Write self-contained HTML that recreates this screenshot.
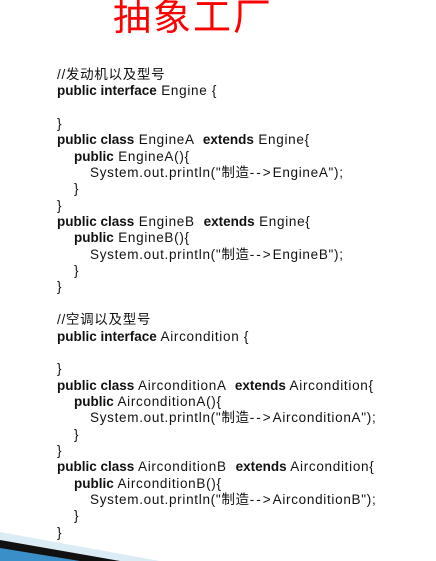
<html><head><style>
body{margin:0;width:436px;height:561px;background:#fff;position:relative;overflow:hidden;font-family:"Liberation Sans","Noto Sans CJK SC",sans-serif;}
.t{position:absolute;left:113px;top:-14px;font-size:38px;color:#f00;letter-spacing:2px;font-family:"Noto Sans CJK SC",sans-serif;}
.c{position:absolute;left:57px;top:67px;font-size:13.5px;line-height:16.35px;color:#111;white-space:pre;letter-spacing:0.7px}
.c div{height:16.35px}
.i1{padding-left:17px}.i2{padding-left:33px}
b{font-weight:bold;letter-spacing:0}
.a{letter-spacing:2px}
</style></head><body>
<div class="t">抽象工厂</div>
<div class="c"><div>//发动机以及型号</div><div><b>public interface</b> Engine {</div><div></div><div>}</div><div><b>public class</b> EngineA  <b>extends</b> Engine{</div><div class="i1"><b>public</b> EngineA(){</div><div class="i2">System.out.println("制造<span class="a">--&gt;</span>EngineA");</div><div class="i1">}</div><div>}</div><div><b>public class</b> EngineB  <b>extends</b> Engine{</div><div class="i1"><b>public</b> EngineB(){</div><div class="i2">System.out.println("制造<span class="a">--&gt;</span>EngineB");</div><div class="i1">}</div><div>}</div><div></div><div>//空调以及型号</div><div><b>public interface</b> Aircondition {</div><div></div><div>}</div><div><b>public class</b> AirconditionA  <b>extends</b> Aircondition{</div><div class="i1"><b>public</b> AirconditionA(){</div><div class="i2">System.out.println("制造<span class="a">--&gt;</span>AirconditionA");</div><div class="i1">}</div><div>}</div><div><b>public class</b> AirconditionB  <b>extends</b> Aircondition{</div><div class="i1"><b>public</b> AirconditionB(){</div><div class="i2">System.out.println("制造<span class="a">--&gt;</span>AirconditionB");</div><div class="i1">}</div><div>}</div></div>
<svg style="position:absolute;left:0;top:0" width="436" height="561">
<polygon points="0,532 160,561 0,561" fill="#dcecf4"/>
<polygon points="0,540 120,561 0,561" fill="#111"/>
<polygon points="0,548 80,561 0,561" fill="#3a8fc8"/>
</svg>
</body></html>
